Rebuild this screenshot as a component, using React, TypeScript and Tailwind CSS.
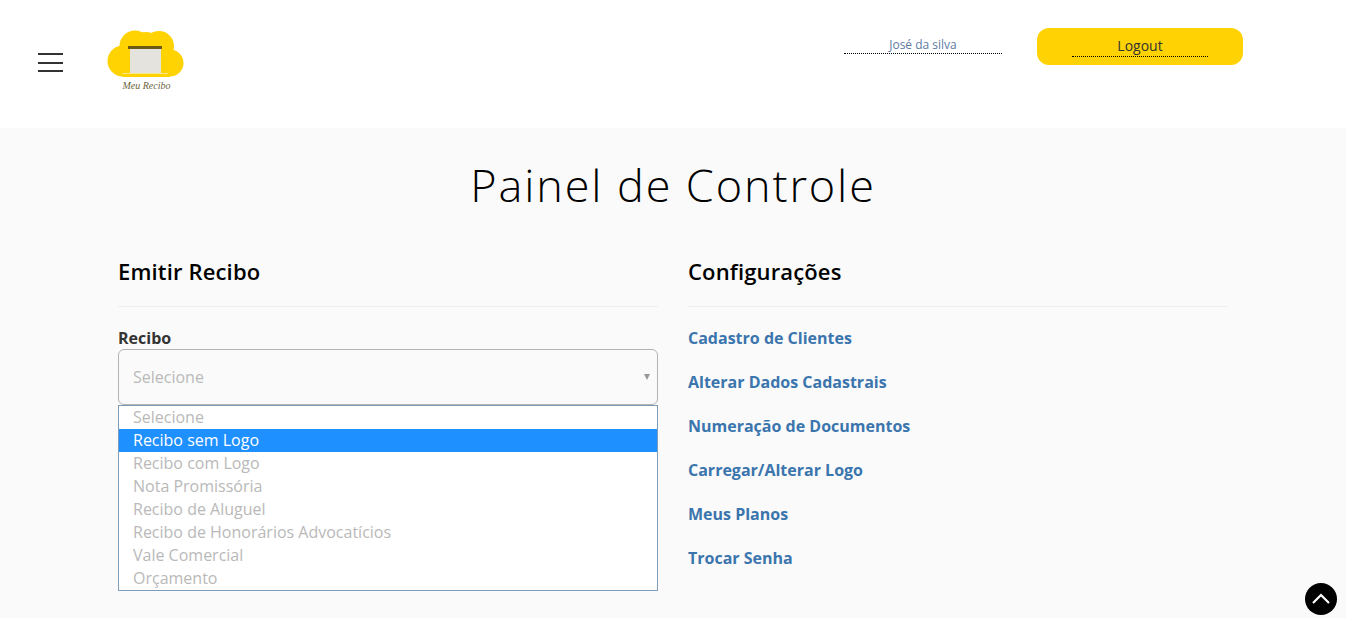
import React from "react";

const opcoes = [
  "Selecione",
  "Recibo sem Logo",
  "Recibo com Logo",
  "Nota Promissória",
  "Recibo de Aluguel",
  "Recibo de Honorários Advocatícios",
  "Vale Comercial",
  "Orçamento",
];

const links = [
  "Cadastro de Clientes",
  "Alterar Dados Cadastrais",
  "Numeração de Documentos",
  "Carregar/Alterar Logo",
  "Meus Planos",
  "Trocar Senha",
];

const Logo = () => (
  <svg width="80" height="66" viewBox="0 0 80 66">
    <g fill="#ffd201">
      <circle cx="17" cy="33" r="15.5" />
      <circle cx="29" cy="18" r="15.5" />
      <circle cx="40" cy="19" r="15" />
      <circle cx="53" cy="18" r="15" />
      <circle cx="64" cy="35" r="13.5" />
      <rect x="17" y="22" width="47" height="27" />
    </g>
    <rect x="16" y="45" width="46" height="1" fill="#f7e68a" />
    <rect x="24" y="20" width="31" height="25" fill="#e4e3de" />
    <rect x="22" y="18" width="34" height="3" fill="#6b5a16" />
    <text
      x="40.5"
      y="61"
      textAnchor="middle"
      fontSize="10"
      fontStyle="italic"
      fill="#6b6540"
      fontFamily='"Liberation Serif", serif'
    >
      Meu Recibo
    </text>
  </svg>
);

const App = () => {
  return (
    <div className="w-full h-[618px] overflow-hidden bg-[#fafafa] font-['Open_Sans',sans-serif]">
      <header className="h-[128px] bg-white flex items-start">
        <div className="ml-[38px] mt-[53px] w-[25px] flex flex-col gap-[6.5px]">
          <span className="block h-[2px] bg-[#333]"></span>
          <span className="block h-[2px] bg-[#333]"></span>
          <span className="block h-[2px] bg-[#333]"></span>
        </div>
        <div className="ml-[43px] mt-[28px]">
          <Logo />
        </div>
        <div className="ml-auto mt-[37px] w-[158px] h-[17px] border-b border-dotted border-black text-center text-[12px] leading-[16px] text-[#5d7ba3]">
          José da silva
        </div>
        <div className="ml-[35px] mr-[103px] mt-[28px] w-[206px] h-[37px] rounded-[12px] bg-[#ffd203] flex justify-center">
          <div className="w-[136px] h-[29px] border-b border-dotted border-black text-center text-[14px] leading-[36px] text-[#333]">
            Logout
          </div>
        </div>
      </header>

      <main className="px-[118px]">
        <h1 className="pt-[26px] text-center text-[45px] leading-[62px] font-light tracking-[1.9px] text-black">
          Painel de Controle
        </h1>

        <div className="mt-[40px] grid grid-cols-[540px_540px] gap-x-[30px]">
          <section>
            <h2 className="text-[22px] leading-[30px] font-[550] tracking-[0.15px] text-black">
              Emitir Recibo
            </h2>
            <hr className="mt-[20px] border-[#eeeeee]" />
            <label className="block mt-[20px] text-[16px] leading-[22px] font-bold text-[#333]">
              Recibo
            </label>
            <div className="relative">
              <div className="h-[56px] rounded-[6px] border border-[#b3b3b3] flex items-center justify-between pl-[14px] pr-[7px] text-[16px] text-[#b9b9b9]">
                <span>Selecione</span>
                <span className="w-0 h-0 border-x-[3px] border-x-transparent border-t-[6px] border-t-[#999]"></span>
              </div>
              <ul className="absolute left-0 top-[56px] w-full h-[186px] border border-[#7f9db9] bg-white text-[16px] leading-[23px]">
                {opcoes.map((opcao) => (
                  <li
                    key={opcao}
                    className={
                      opcao === "Recibo sem Logo"
                        ? "pl-[14px] h-[23px] bg-[#1e90ff] text-white"
                        : "pl-[14px] h-[23px] text-[#b9b9b9]"
                    }
                  >
                    {opcao}
                  </li>
                ))}
              </ul>
            </div>
          </section>

          <section>
            <h2 className="text-[22px] leading-[30px] font-[550] tracking-[0.15px] text-black">
              Configurações
            </h2>
            <hr className="mt-[20px] border-[#eeeeee]" />
            <div className="mt-[20px] flex flex-col gap-[22px]">
              {links.map((link) => (
                <a
                  key={link}
                  href="#"
                  className="block text-[16px] leading-[22px] font-bold text-[#3a75ad]"
                >
                  {link}
                </a>
              ))}
            </div>
          </section>
        </div>
      </main>

      <a
        href="#"
        className="fixed left-[1305px] top-[583px] w-[32px] h-[32px] rounded-full bg-black flex items-center justify-center"
      >
        <svg width="20" height="12" viewBox="0 0 20 12" fill="none">
          <path d="M2 10 L10 2 L18 10" stroke="white" strokeWidth="2.2" />
        </svg>
      </a>
    </div>
  );
};

export default App;
